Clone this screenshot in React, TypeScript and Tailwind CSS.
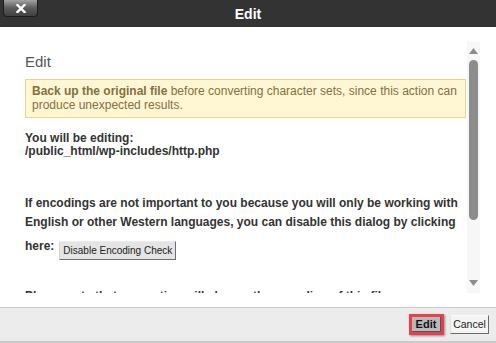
import React from 'react'

const font = "font-['Liberation_Sans',Arial,sans-serif]"

function CloseButton() {
  return (
    <button className="absolute left-[3px] top-0 w-[35px] h-[17px] rounded-b-[4px] border border-t-0 border-[#1c1c1c] bg-gradient-to-b from-[#a4a4a4] via-[#5c5c5c] to-[#404040] flex items-center justify-center">
      <svg width="10" height="9" viewBox="0 0 10 9">
        <path d="M1.5 1 L8.5 8 M8.5 1 L1.5 8" stroke="#fff" strokeWidth="2.4" strokeLinecap="square" />
      </svg>
    </button>
  )
}

function Scrollbar() {
  return (
    <div className="w-[13px] h-full bg-[#f7f7f7] flex flex-col items-center">
      <svg className="mt-[6px]" width="9" height="6" viewBox="0 0 9 6">
        <path d="M4.5 0 L9 6 L0 6 Z" fill="#8c8c8c" />
      </svg>
      <div className="mt-[6px] w-[9px] h-[160px] rounded-full bg-[#8c8c8c]" />
      <div className="flex-1" />
      <svg className="mb-[7px]" width="9" height="6" viewBox="0 0 9 6">
        <path d="M0 0 L9 0 L4.5 6 Z" fill="#8c8c8c" />
      </svg>
    </div>
  )
}

export default function App() {
  return (
    <div className={`w-[496px] h-[343px] bg-white flex flex-col overflow-hidden ${font}`}>
      {/* header */}
      <div className="relative h-[27px] shrink-0 bg-[#333333] flex items-center justify-center">
        <CloseButton />
        <span className="text-white font-bold text-[14px] leading-none">Edit</span>
      </div>

      {/* body */}
      <div className="mt-[15px] h-[251px] shrink-0 flex pl-[25px]">
        <div className="w-[442px] overflow-hidden text-[#333]">
          <h2 className="mt-[11px] text-[15px] leading-[18px] text-[#555]">Edit</h2>
          <div className="mt-[8px] w-[441px] border border-[#e6d68a] bg-[#fff6d3] px-[6px] pt-[4px] pb-[5px] text-[12px] leading-[14px] text-[#85703e]">
            <b>Back up the original file</b> before converting character sets, since this action can produce unexpected results.
          </div>
          <div className="mt-[14px] text-[12px] leading-[13px] font-bold">
            <div>You will be editing:</div>
            <div>/public_html/wp-includes/http.php</div>
          </div>
          <div className="mt-[36px] text-[12px] leading-[19px] font-bold whitespace-nowrap">
            If encodings are not important to you because you will only be working with<br />
            English or other Western languages, you can disable this dialog by clicking
          </div>
          <div className="mt-[7px] flex items-start text-[12px] font-bold leading-[14px]">
            <span>here:</span>
            <button className="ml-[5px] mt-[2px] h-[19px] px-[3px] bg-[#e4e4e4] border border-t-[#ececec] border-l-[#d4d4d4] border-r-[#6e6e6e] border-b-[#6e6e6e] text-[10px] font-normal text-[#222] leading-none">
              Disable Encoding Check
            </button>
          </div>
          <div className="mt-[29px] text-[12px] leading-[14px] font-bold whitespace-nowrap">
            Please note that converting will change the encoding of this file.
          </div>
        </div>
        <Scrollbar />
      </div>

      <div className="h-[14px] shrink-0" />

      {/* footer */}
      <div className="flex-1 bg-[#ececec] border-t border-[#c8c8c8] border-b-2 border-b-[#cacaca] flex items-center justify-end pr-[7px] gap-[6px]">
        <div className="w-[35px] h-[21px] border-[3px] border-[#e8404a] shadow-[1px_1px_2px_rgba(0,0,0,0.4)] flex">
          <button className="flex-1 bg-[#b9b9b9] border-r border-b border-[#555] text-[11px] font-bold text-[#111] leading-none">
            Edit
          </button>
        </div>
        <button className="w-[39px] h-[19px] bg-[#f4f4f4] border border-t-[#fafafa] border-l-[#e0e0e0] border-r-[#6a6a6a] border-b-[#6a6a6a] text-[10.5px] text-[#222] leading-none">
          Cancel
        </button>
      </div>
    </div>
  )
}
